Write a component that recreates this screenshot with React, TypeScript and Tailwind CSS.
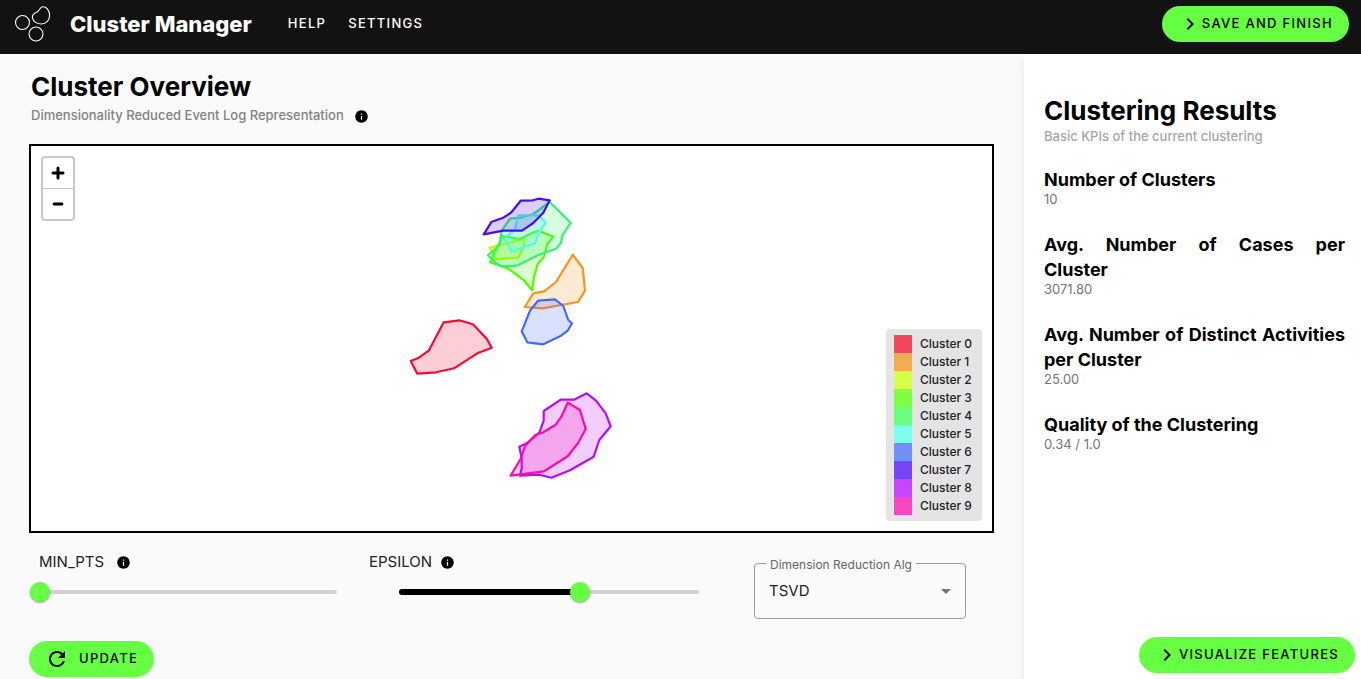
import { useState } from "react";
import type { ReactNode } from "react";
import { MdChevronRight, MdInfo, MdRefresh, MdArrowDropDown } from "react-icons/md";

type Cluster = { name: string; stroke: string; swatch: string; points: string };

const clusters: Cluster[] = [
  {
    name: "Cluster 0",
    stroke: "#f70a32",
    swatch: "bg-[#f4465d]",
    points:
      "443.7,322.3 459.3,320.3 473,324.3 486.7,338.7 491.7,347.7 477.3,353.3 454,368.3 436,372.3 417.3,373.7 410.7,361 417.7,358.3 428.7,350.7",
  },
  {
    name: "Cluster 1",
    stroke: "#f7941e",
    swatch: "bg-[#f3ac50]",
    points:
      "572.7,254.7 582.7,268 585,290.7 578,302 542.3,308.3 524.7,307 533.3,293.3 544,291.3 556,282",
  },
  {
    name: "Cluster 2",
    stroke: "#c8fa00",
    swatch: "bg-[#d6ff45]",
    points:
      "489.3,247.7 503,244 524.3,239.3 524.3,245 518.3,257.7 494,259.3 493.3,254",
  },
  {
    name: "Cluster 3",
    stroke: "#4dff00",
    swatch: "bg-[#7dff45]",
    points:
      "490,262.3 502.7,236 520,239 531.7,233.3 538.3,230.7 553.3,236.7 547.3,244 544,256.7 537.7,264 534,276.7 532,290.3 524.3,280.7 508.3,268.7 500.7,265.7",
  },
  {
    name: "Cluster 4",
    stroke: "#33f26e",
    swatch: "bg-[#6aff7e]",
    points:
      "549.7,202 570.7,222.7 562.7,235 560.7,243.3 556,248.7 538.3,255 516.7,265.7 500.7,266.3 494,261.3 488,255.3 499.3,245.3 501.7,230.7 510,218.7 520,217.7 533.3,214",
  },
  {
    name: "Cluster 5",
    stroke: "#4ffaf0",
    swatch: "bg-[#7dffee]",
    points:
      "518.3,215.3 538.3,215.3 545.7,222.7 539,232 535,243.3 511.7,251.7 504,238.3 515,229.3",
  },
  {
    name: "Cluster 6",
    stroke: "#4169ff",
    swatch: "bg-[#748ef8]",
    points:
      "538,300.7 555,299.3 563.3,306 568.3,320 572,323.3 567.7,330.7 560,336.3 543.3,344.3 527.3,342.3 521.7,331.3 530,310.7",
  },
  {
    name: "Cluster 7",
    stroke: "#4a0af5",
    swatch: "bg-[#7745f8]",
    points:
      "483.7,234.3 491.7,221.7 503.3,217.7 511,212.7 520.7,200.7 532.7,200.3 538.7,198.7 549.7,200.3 543.3,212.7 533.3,223 522,230.7 503.3,230.7",
  },
  {
    name: "Cluster 8",
    stroke: "#b90aff",
    swatch: "bg-[#c845fb]",
    points:
      "543.7,411 560.7,399.7 574,399.7 586.7,393.3 596,400.7 605.7,413.3 610.7,426.3 599.3,440 593.7,456.7 570,470.3 551.3,477.7 539.3,474.7 520,475.7 521.7,468.3 521.7,458.3 519.3,446.7 526.7,443.3 539.3,432.7 543.7,420.7",
  },
  {
    name: "Cluster 9",
    stroke: "#ff0aaa",
    swatch: "bg-[#f745c4]",
    points:
      "567.7,402.7 579.7,409.7 585.7,428.7 578.3,442.7 567.7,456.3 544,471.3 510.5,475.7 520.7,458.7 525,446 535.3,435 543.3,432.3 555.7,424.7 561.3,416.7",
  },
];

const drawOrder = [2, 3, 4, 5, 7, 1, 6, 0, 8, 9];

const results = [
  { lines: ["Number of Clusters"], value: "10" },
  { lines: ["Avg. Number of Cases per", "Cluster"], value: "3071.80" },
  { lines: ["Avg. Number of Distinct Activities", "per Cluster"], value: "25.00" },
  { lines: ["Quality of the Clustering"], value: "0.34 / 1.0" },
];

function Logo() {
  return (
    <svg viewBox="0 0 38 38" className="size-[38px]" fill="none" stroke="white" strokeWidth="1.1" aria-hidden="true">
      <circle cx="8.5" cy="17.5" r="7" />
      <circle cx="22" cy="29" r="7" />
      <path d="M28.5 1.8C32 1.2 35.6 5.2 35.6 10.5C35.6 15.6 32 19 27.2 19C23 19 19.2 16.6 18.5 13.2C17.8 9.8 19.6 8.4 22.6 7.2C25.6 6 25.4 2.4 28.5 1.8Z" />
    </svg>
  );
}

function PillButton({ icon, children }: { icon: ReactNode; children: ReactNode }) {
  return (
    <button
      type="button"
      className="flex h-9 items-center rounded-full bg-[#66ff44] px-4 text-[13px] font-medium tracking-widest text-black uppercase"
    >
      {icon}
      {children}
    </button>
  );
}

function InfoButton({ about }: { about: string }) {
  return (
    <button type="button" aria-label={about} className="text-black">
      <MdInfo className="size-[15px]" />
    </button>
  );
}

function Slider({ id, value, onChange }: { id: string; value: number; onChange: (v: number) => void }) {
  return (
    <div className="grid h-5 grid-cols-1 items-center">
      <span className="col-start-1 row-start-1 h-1 rounded-full bg-[#d2d2d2]" />
      {value > 0 && (
        <span className="col-start-1 row-start-1 h-1.5 rounded-full bg-black" style={{ width: `${value}%` }} />
      )}
      <input
        id={id}
        type="range"
        min={0}
        max={100}
        value={value}
        onChange={(e) => onChange(Number(e.target.value))}
        className="z-10 col-start-1 row-start-1 h-5 w-full cursor-pointer appearance-none bg-transparent [&::-webkit-slider-thumb]:size-5 [&::-webkit-slider-thumb]:appearance-none [&::-webkit-slider-thumb]:rounded-full [&::-webkit-slider-thumb]:bg-[#66ff44] [&::-webkit-slider-thumb]:shadow-[0_1px_2px_rgba(0,0,0,0.4)]"
      />
    </div>
  );
}

export default function App() {
  const [minPts, setMinPts] = useState(0);
  const [epsilon, setEpsilon] = useState(61);

  return (
    <div className="flex min-h-screen flex-col bg-[#fafafa] font-[Inter,sans-serif] text-black">
      <header className="flex h-[54px] items-center justify-between bg-[#121212] pr-3 pb-1.5 pl-3.5 text-white">
        <div className="flex items-center">
          <Logo />
          <span className="ml-[18px] text-[22px] font-extrabold">Cluster Manager</span>
          <nav className="ml-9 flex gap-[22px] text-[13px] font-medium tracking-widest">
            <a href="#help">HELP</a>
            <a href="#settings">SETTINGS</a>
          </nav>
        </div>
        <PillButton icon={<MdChevronRight className="size-6" />}>Save and finish</PillButton>
      </header>

      <div className="flex flex-1">
        <main className="min-w-0 flex-1 pr-[30px] pl-[29px]">
          <h1 className="mt-[17px] pl-0.5 text-[26px] leading-8 font-bold">Cluster Overview</h1>
          <div className="mt-[3px] flex h-5 items-center gap-2.5 pl-0.5 text-[13px] font-medium text-[#828282]">
            <p>Dimensionality Reduced Event Log Representation</p>
            <InfoButton about="About the representation" />
          </div>

          <section aria-label="Cluster map" className="relative mt-[18px] border-2 border-black bg-white">
            <svg viewBox="31 146 961 385" className="block h-auto w-full" role="img" aria-label="Clusters">
              {drawOrder.map((i) => (
                <polygon
                  key={i}
                  points={clusters[i].points}
                  fill={clusters[i].stroke}
                  fillOpacity="0.2"
                  stroke={clusters[i].stroke}
                  strokeWidth="2.2"
                  strokeLinejoin="round"
                />
              ))}
            </svg>
            <div className="absolute top-2.5 left-2.5 flex w-[34px] flex-col rounded border-2 border-[#c8c8c8] bg-white">
              <button type="button" aria-label="Zoom in" className="grid h-[31px] place-items-center border-b border-[#c8c8c8]">
                <svg viewBox="0 0 14 14" className="size-3.5" stroke="black" strokeWidth="3" strokeLinecap="round">
                  <path d="M7 2V12M2 7H12" />
                </svg>
              </button>
              <button type="button" aria-label="Zoom out" className="grid h-[30px] place-items-center">
                <svg viewBox="0 0 14 14" className="size-3.5" stroke="black" strokeWidth="2.8" strokeLinecap="round">
                  <path d="M3 7H11" />
                </svg>
              </button>
            </div>
            <ul className="absolute right-2.5 bottom-2.5 w-24 rounded bg-[#e4e4e4] px-2 py-1.5 text-xs font-medium text-[#222222]">
              {clusters.map((c) => (
                <li key={c.name} className="flex h-[18px] items-center gap-2">
                  <span className={`size-[18px] ${c.swatch}`} />
                  {c.name}
                </li>
              ))}
            </ul>
          </section>

          <div className="mt-[17px] flex justify-between pr-7">
            <div className="w-[308px]">
              <div className="flex h-6 items-center gap-3 pl-2.5">
                <label htmlFor="min-pts" className="text-[15px] text-[#222222]">MIN_PTS</label>
                <InfoButton about="About MIN_PTS" />
              </div>
              <div className="mt-2 pl-px">
                <Slider id="min-pts" value={minPts} onChange={setMinPts} />
              </div>
            </div>
            <div className="-ml-[23px] w-[330px]">
              <div className="flex h-6 items-center gap-2">
                <label htmlFor="epsilon" className="text-[15px] text-[#222222]">EPSILON</label>
                <InfoButton about="About EPSILON" />
              </div>
              <div className="mt-2 pl-[30px]">
                <Slider id="epsilon" value={epsilon} onChange={setEpsilon} />
              </div>
            </div>
            <div className="relative mt-[13px] h-14 w-[212px]">
              <label htmlFor="algorithm" className="absolute -top-1.5 left-3 bg-[#fafafa] px-1 text-xs leading-4 text-[#666666]">
                Dimension Reduction Alg
              </label>
              <select
                id="algorithm"
                className="h-full w-full appearance-none rounded border border-[#9b9b9b] bg-transparent pl-3.5 text-[15px] text-[#222222]"
              >
                <option>TSVD</option>
              </select>
              <MdArrowDropDown className="pointer-events-none absolute top-4 right-2 size-6 text-[#757575]" />
            </div>
          </div>

          <div className="mt-[22px] flex pb-0.5">
            <PillButton icon={<MdRefresh className="mr-2.5 size-6" />}>Update</PillButton>
          </div>
        </main>

        <aside className="flex w-[337px] flex-col bg-white pt-[41px] pr-1.5 pb-1.5 pl-5 shadow-[0_6px_8px_rgba(0,0,0,0.08)]">
          <h2 className="text-[26px] leading-8 font-bold">Clustering Results</h2>
          <p className="text-[13px] leading-[18px] font-medium text-[#a6a6a6]">Basic KPIs of the current clustering</p>
          <dl className="mt-[22px] flex flex-col gap-[25px] pr-2.5">
            {results.map(({ lines, value }) => (
              <div key={lines.join(" ")}>
                <dt className="text-lg leading-[25px] font-bold">
                  {lines.map((line, i) => (
                    <span
                      key={line}
                      className={i < lines.length - 1 ? "block [text-align-last:justify]" : "block"}
                    >
                      {line}{" "}
                    </span>
                  ))}
                </dt>
                <dd className="text-[13px] leading-[15px] text-[#757575]">{value}</dd>
              </div>
            ))}
          </dl>
          <div className="mt-auto flex justify-end">
            <PillButton icon={<MdChevronRight className="size-6" />}>Visualize features</PillButton>
          </div>
        </aside>
      </div>
    </div>
  );
}
